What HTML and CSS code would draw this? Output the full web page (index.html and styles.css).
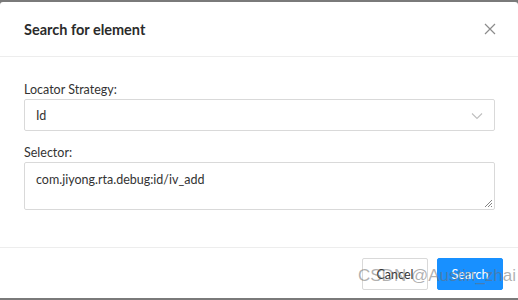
FILE: index.html
```html
<!DOCTYPE html>
<html>
<head>
<meta charset="utf-8">
<link rel="stylesheet" href="styles.css">
</head>
<body>
<div class="frame">
  <div class="dialog">
    <div class="header">
      <div class="title">Search for element</div>
      <svg class="close" width="12" height="12" viewBox="0 0 12 12"><path d="M1 1L11 11M11 1L1 11" stroke="#8c8c8c" stroke-width="1.2" fill="none"/></svg>
    </div>
    <div class="body">
      <label class="label">Locator Strategy:</label>
      <div class="select">
        <span>Id</span>
        <svg class="chev" width="12" height="8" viewBox="0 0 12 8"><path d="M1 1.5L6 6.5L11 1.5" stroke="#bfbfbf" stroke-width="1.1" fill="none"/></svg>
      </div>
      <label class="label second">Selector:</label>
      <div class="textarea">
        <span>com.jiyong.rta.debug:id/iv_add</span>
        <svg class="grip" width="10" height="10" viewBox="0 0 10 10"><path d="M9 2L2 9M9 5L5 9M9 8L8 9" stroke="#777" stroke-width="0.9" fill="none"/></svg>
      </div>
    </div>
    <div class="footer">
      <button class="btn cancel">Cancel</button>
      <button class="btn primary">Search</button>
    </div>
    <div class="watermark">CSDN @Austin_zhai</div>
  </div>
</div>
</body>
</html>
```
FILE: styles.css
```css
html, body {
  margin: 0;
  padding: 0;
  background: #fff;
}
.frame {
  width: 518px;
  height: 300px;
  background: #7a7a7a;
  padding-top: 2px;
  box-sizing: border-box;
  overflow: hidden;
}
.dialog {
  position: relative;
  background: #fff;
  height: 296px;
  border-radius: 3px 3px 0 0;
  font-family: "Lato", "Noto Sans", sans-serif;
  color: #262626;
  overflow: hidden;
}
.header {
  height: 54px;
  display: flex;
  align-items: center;
  justify-content: space-between;
  padding: 0 22px 0 24px;
  border-bottom: 1px solid #ededed;
}
.title {
  font-size: 14.5px;
  font-weight: 700;
  color: #2b2b2b;
}
.close { display: block; }
.body {
  padding: 25px 23px 37px 24px;
  display: flex;
  flex-direction: column;
}
.label {
  font-size: 12.5px;
  color: #333;
  line-height: 16px;
  margin-bottom: 1px;
}
.label.second { margin-top: 14px; }
.select {
  height: 29px;
  border: 1px solid #d9d9d9;
  border-radius: 2px;
  display: flex;
  align-items: center;
  justify-content: space-between;
  padding: 1px 11px 0 11px;
  font-size: 12.5px;
  color: #333;
}
.chev { display: block; }
.textarea {
  position: relative;
  border: 1px solid #d9d9d9;
  border-radius: 2px;
  padding: 9px 11px;
  box-sizing: border-box;
  height: 48px;
  font-size: 12.5px;
  color: #333;
}
.grip { position: absolute; right: 1px; bottom: 1px; }
.footer {
  border-top: 1px solid #ededed;
  display: flex;
  justify-content: flex-end;
  gap: 9px;
  padding: 10px 15px 0 0;
}
.btn {
  height: 32px;
  width: 66px;
  font-family: "Lato", "Noto Sans", sans-serif;
  font-size: 12.5px;
  border-radius: 2px;
  padding: 1px 0 0;
}
.cancel {
  background: #fff;
  border: 1px solid #d9d9d9;
  color: #333;
}
.primary {
  background: #1890ff;
  border: 1px solid #1890ff;
  color: #fff;
}
.watermark {
  position: absolute;
  left: 358px;
  top: 264px;
  white-space: nowrap;
  font-family: "Liberation Sans", sans-serif;
  font-size: 17px;
  color: rgba(110, 110, 110, 0.55);
}
```
